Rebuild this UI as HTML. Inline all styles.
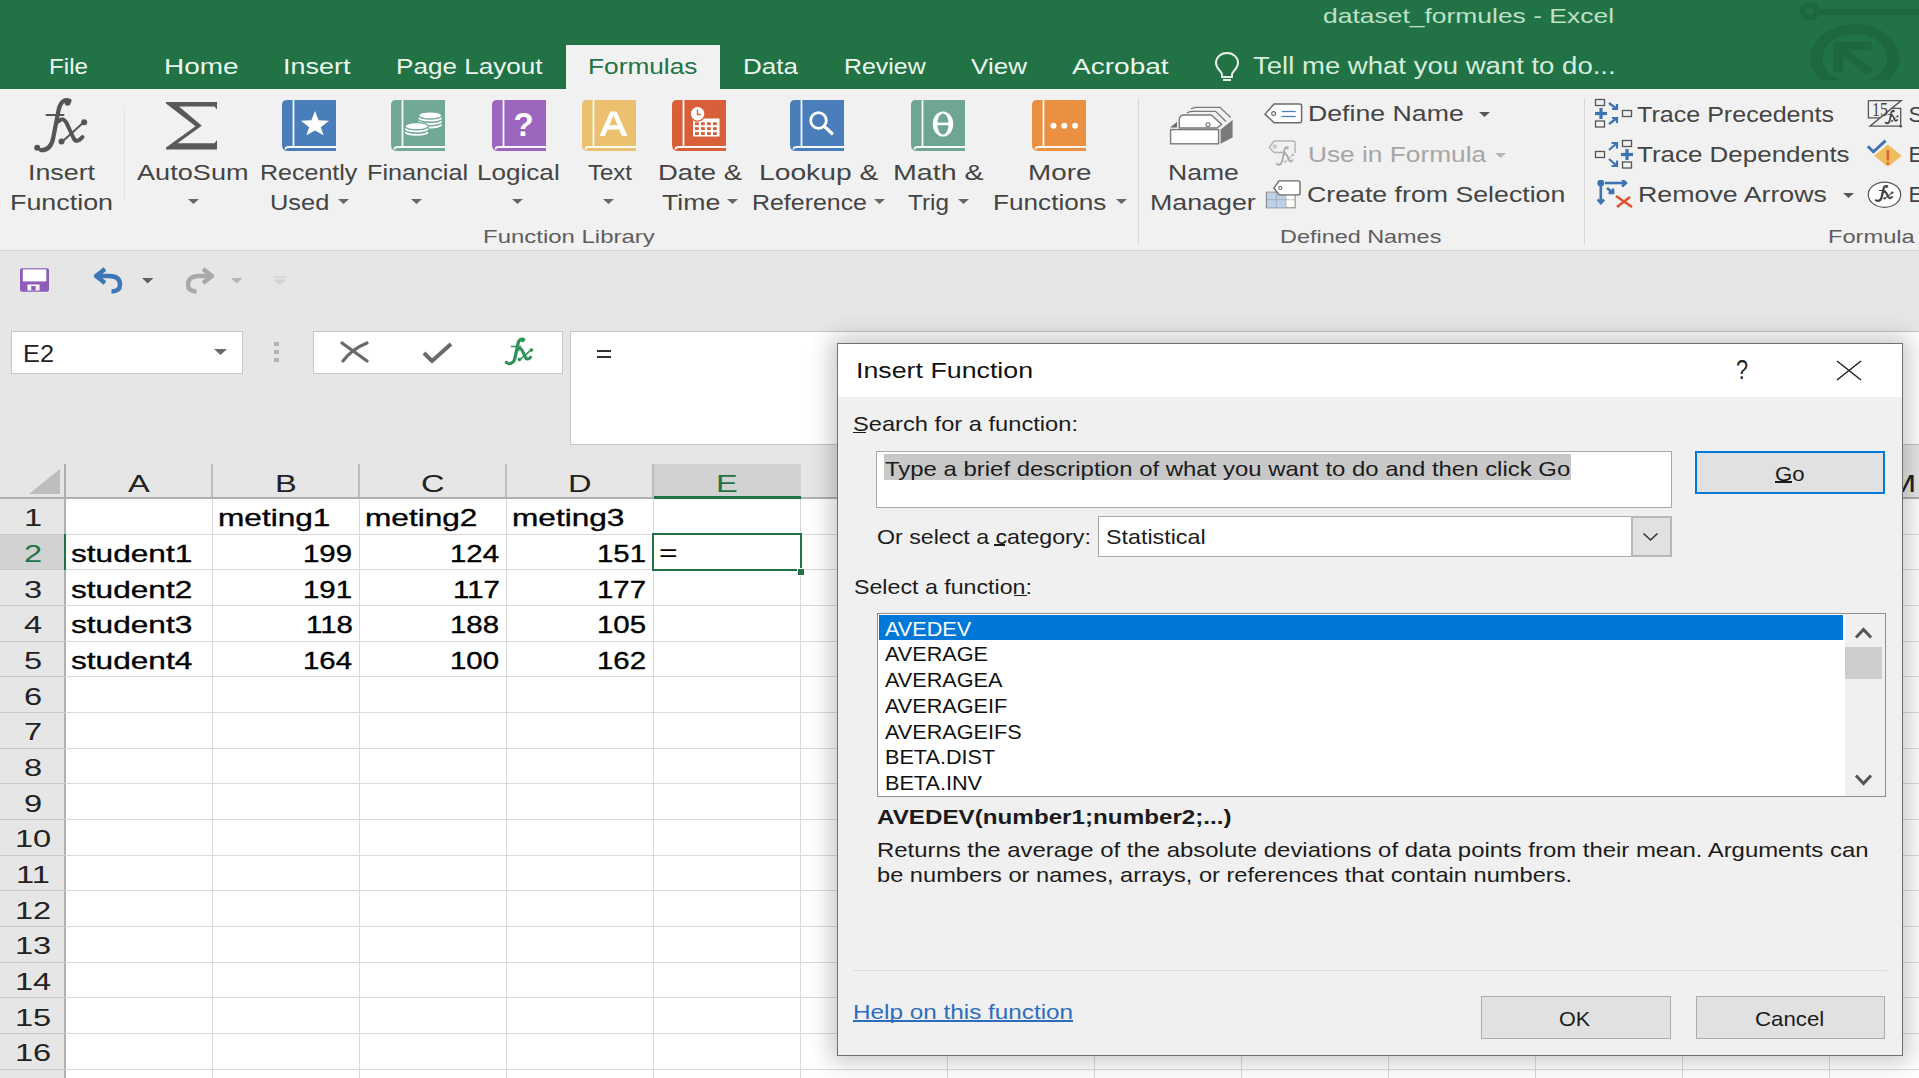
<!DOCTYPE html>
<html><head><meta charset="utf-8"><style>
html,body{margin:0;padding:0;width:1919px;height:1078px;overflow:hidden;background:#fff;}
body{position:relative;font-family:"Liberation Sans",sans-serif;}
.t{position:absolute;white-space:pre;line-height:1;transform-origin:0 0;}
.r{position:absolute;}
</style></head><body>
<div class="r" style="left:0px;top:0px;width:1919px;height:89px;background:#217346;"></div>
<svg class="r" style="left:1760px;top:0px" width="159" height="89" viewBox="0 0 159 89">
<g fill="none" stroke="#1e683d">
<ellipse cx="50" cy="11.3" rx="7" ry="6.3" stroke-width="6"/><line x1="57" y1="11.7" x2="159" y2="11.7" stroke-width="6.6"/>
<g transform="scale(1.33,1)"><circle cx="71.4" cy="58" r="29" stroke-width="9.5"/></g>
</g>
<path d="M73,41.8 H111.5 V50.1 H88 L112.5,69 L106.5,75.5 L83.5,56 V71.8 H73 Z" fill="#1e683d"/>
<rect x="0" y="80" width="159" height="9" fill="#217346"/>
</svg>
<div class="t" style="left:1323.00px;top:5.45px;font-size:21px;color:#bfe0c6;transform:scaleX(1.2592);">dataset_formules - Excel</div>
<div class="r" style="left:566px;top:45px;width:154px;height:44px;background:#f1f1f1;"></div>
<div class="t" style="left:48.50px;top:56.17px;font-size:22.5px;color:#ebf7ef;transform:scaleX(1.0766);">File</div>
<div class="t" style="left:164.30px;top:56.17px;font-size:22.5px;color:#ebf7ef;transform:scaleX(1.2434);">Home</div>
<div class="t" style="left:283.30px;top:56.17px;font-size:22.5px;color:#ebf7ef;transform:scaleX(1.1982);">Insert</div>
<div class="t" style="left:395.70px;top:56.17px;font-size:22.5px;color:#ebf7ef;transform:scaleX(1.1604);">Page Layout</div>
<div class="t" style="left:743.30px;top:56.17px;font-size:22.5px;color:#ebf7ef;transform:scaleX(1.1558);">Data</div>
<div class="t" style="left:844.30px;top:56.17px;font-size:22.5px;color:#ebf7ef;transform:scaleX(1.1070);">Review</div>
<div class="t" style="left:970.70px;top:56.17px;font-size:22.5px;color:#ebf7ef;transform:scaleX(1.1576);">View</div>
<div class="t" style="left:1071.70px;top:56.17px;font-size:22.5px;color:#ebf7ef;transform:scaleX(1.2463);">Acrobat</div>
<div class="t" style="left:587.50px;top:56.17px;font-size:22.5px;color:#217346;transform:scaleX(1.1671);">Formulas</div>
<svg class="r" style="left:1212px;top:50px" width="30" height="34" viewBox="0 0 30 34"><g fill="none" stroke="#e8f3ec" stroke-width="2">
<path d="M15,3 C8,3 4,8 4,13 C4,18 8,20 10,24 L10,27 L20,27 L20,24 C22,20 26,18 26,13 C26,8 22,3 15,3 Z"/>
<line x1="11" y1="30" x2="19" y2="30"/></g></svg>
<div class="t" style="left:1252.50px;top:55.45px;font-size:23px;color:#d6ecdc;transform:scaleX(1.1969);">Tell me what you want to do...</div>
<div class="r" style="left:0px;top:89px;width:1919px;height:161px;background:#f1f1f1;"></div>
<div class="r" style="left:0px;top:250px;width:1919px;height:1px;background:#d6d6d6;"></div>
<div class="r" style="left:124px;top:110px;width:1px;height:89px;background:#e1e1e1;"></div>
<div class="r" style="left:1138px;top:98px;width:1px;height:146px;background:#d7d7d7;"></div>
<div class="r" style="left:1584px;top:98px;width:1px;height:146px;background:#d7d7d7;"></div>
<div class="t" style="left:28.00px;top:162.38px;font-size:22.5px;color:#444444;transform:scaleX(1.1911);">Insert</div>
<div class="t" style="left:10.00px;top:191.88px;font-size:22.5px;color:#444444;transform:scaleX(1.1937);">Function</div>
<div class="t" style="left:136.70px;top:162.38px;font-size:22.5px;color:#444444;transform:scaleX(1.2053);">AutoSum</div>
<div class="t" style="left:260.00px;top:162.38px;font-size:22.5px;color:#444444;transform:scaleX(1.1117);">Recently</div>
<div class="t" style="left:270.00px;top:191.88px;font-size:22.5px;color:#444444;transform:scaleX(1.1287);">Used</div>
<div class="t" style="left:366.70px;top:162.38px;font-size:22.5px;color:#444444;transform:scaleX(1.1222);">Financial</div>
<div class="t" style="left:477.30px;top:162.38px;font-size:22.5px;color:#444444;transform:scaleX(1.1595);">Logical</div>
<div class="t" style="left:587.70px;top:162.38px;font-size:22.5px;color:#444444;transform:scaleX(1.0657);">Text</div>
<div class="t" style="left:658.30px;top:162.38px;font-size:22.5px;color:#444444;transform:scaleX(1.2220);">Date &amp;</div>
<div class="t" style="left:661.70px;top:191.88px;font-size:22.5px;color:#444444;transform:scaleX(1.1859);">Time</div>
<div class="t" style="left:759.00px;top:162.38px;font-size:22.5px;color:#444444;transform:scaleX(1.2550);">Lookup &amp;</div>
<div class="t" style="left:751.70px;top:191.88px;font-size:22.5px;color:#444444;transform:scaleX(1.1075);">Reference</div>
<div class="t" style="left:893.30px;top:162.38px;font-size:22.5px;color:#444444;transform:scaleX(1.2716);">Math &amp;</div>
<div class="t" style="left:908.30px;top:191.88px;font-size:22.5px;color:#444444;transform:scaleX(1.0814);">Trig</div>
<div class="t" style="left:1028.30px;top:162.38px;font-size:22.5px;color:#444444;transform:scaleX(1.2359);">More</div>
<div class="t" style="left:993.30px;top:191.88px;font-size:22.5px;color:#444444;transform:scaleX(1.1626);">Functions</div>
<div class="t" style="left:1168.20px;top:162.38px;font-size:22.5px;color:#444444;transform:scaleX(1.1785);">Name</div>
<div class="t" style="left:1149.70px;top:191.88px;font-size:22.5px;color:#444444;transform:scaleX(1.1908);">Manager</div>
<svg class="r" style="left:188.0px;top:198.8px" width="11" height="5" viewBox="0 0 11 5"><path d="M0,0 H11 L5.5,5 Z" fill="#666"/></svg>
<svg class="r" style="left:411.2px;top:198.8px" width="11" height="5" viewBox="0 0 11 5"><path d="M0,0 H11 L5.5,5 Z" fill="#666"/></svg>
<svg class="r" style="left:512.2px;top:198.8px" width="11" height="5" viewBox="0 0 11 5"><path d="M0,0 H11 L5.5,5 Z" fill="#666"/></svg>
<svg class="r" style="left:602.8px;top:198.8px" width="11" height="5" viewBox="0 0 11 5"><path d="M0,0 H11 L5.5,5 Z" fill="#666"/></svg>
<svg class="r" style="left:338.2px;top:198.8px" width="11" height="5" viewBox="0 0 11 5"><path d="M0,0 H11 L5.5,5 Z" fill="#666"/></svg>
<svg class="r" style="left:726.8px;top:198.8px" width="11" height="5" viewBox="0 0 11 5"><path d="M0,0 H11 L5.5,5 Z" fill="#666"/></svg>
<svg class="r" style="left:874.0px;top:198.8px" width="11" height="5" viewBox="0 0 11 5"><path d="M0,0 H11 L5.5,5 Z" fill="#666"/></svg>
<svg class="r" style="left:958.3px;top:198.8px" width="11" height="5" viewBox="0 0 11 5"><path d="M0,0 H11 L5.5,5 Z" fill="#666"/></svg>
<svg class="r" style="left:1115.7px;top:198.8px" width="11" height="5" viewBox="0 0 11 5"><path d="M0,0 H11 L5.5,5 Z" fill="#666"/></svg>
<div class="t" style="left:483.30px;top:226.95px;font-size:19px;color:#5e5e5e;transform:scaleX(1.2604);">Function Library</div>
<div class="t" style="left:1280.00px;top:226.95px;font-size:19px;color:#5e5e5e;transform:scaleX(1.2321);">Defined Names</div>
<div class="t" style="left:1828.00px;top:226.95px;font-size:19px;color:#5e5e5e;transform:scaleX(1.2448);">Formula</div>
<div class="t" style="left:1308.00px;top:103.38px;font-size:22.5px;color:#444444;transform:scaleX(1.1859);">Define Name</div>
<svg class="r" style="left:1479.0px;top:111.7px" width="11" height="5" viewBox="0 0 11 5"><path d="M0,0 H11 L5.5,5 Z" fill="#595959"/></svg>
<div class="t" style="left:1307.50px;top:144.18px;font-size:22.5px;color:#a6a6a6;transform:scaleX(1.1679);">Use in Formula</div>
<svg class="r" style="left:1494.5px;top:152.5px" width="11" height="5" viewBox="0 0 11 5"><path d="M0,0 H11 L5.5,5 Z" fill="#b5b5b5"/></svg>
<div class="t" style="left:1307.00px;top:184.18px;font-size:22.5px;color:#444444;transform:scaleX(1.1872);">Create from Selection</div>
<div class="t" style="left:1637.40px;top:103.58px;font-size:22.5px;color:#444444;transform:scaleX(1.1146);">Trace Precedents</div>
<div class="t" style="left:1637.40px;top:144.18px;font-size:22.5px;color:#444444;transform:scaleX(1.1537);">Trace Dependents</div>
<div class="t" style="left:1638.00px;top:184.08px;font-size:22.5px;color:#444444;transform:scaleX(1.1898);">Remove Arrows</div>
<svg class="r" style="left:1843.0px;top:192.5px" width="11" height="5" viewBox="0 0 11 5"><path d="M0,0 H11 L5.5,5 Z" fill="#595959"/></svg>
<div class="t" style="left:1908.60px;top:103.58px;font-size:22.5px;color:#444444;">S</div>
<div class="t" style="left:1908.60px;top:144.18px;font-size:22.5px;color:#444444;">E</div>
<div class="t" style="left:1908.60px;top:184.08px;font-size:22.5px;color:#444444;">E</div>
<div class="r" style="left:0px;top:251px;width:1919px;height:213px;background:#e6e6e6;"></div>
<svg class="r" style="left:30px;top:97px" width="62" height="58" viewBox="0 0 62 58"><g fill="#555" stroke="#555" stroke-linecap="round">
<path d="M39.5,3.8 C33.5,1.5 30,6 28.6,13 L23.2,41 C21.8,48 18.5,53.5 11,53.2" fill="none" stroke-width="4.2"/>
<circle cx="37.6" cy="5.8" r="3" stroke="none"/><circle cx="7.2" cy="50.8" r="3" stroke="none"/>
<line x1="16.5" y1="18" x2="33.5" y2="18" stroke-width="2"/>
<path d="M28.5,24.5 Q33,19.5 36.5,26 L43.5,41 Q46.5,47 52.5,40" fill="none" stroke-width="4"/>
<line x1="54.5" y1="24.5" x2="33" y2="44" stroke-width="2"/>
<circle cx="54.2" cy="25.2" r="3" stroke="none"/><circle cx="31.5" cy="44.5" r="3" stroke="none"/>
</g></svg>
<svg class="r" style="left:166px;top:102px" width="52" height="48" viewBox="0 0 52 48"><path d="M0,0 H51 V7.5 L48.5,4.4 H13 L35.8,23.7 L11.5,41.2 H48.5 L51,38 V47.6 H0 V45.5 L29.5,24.2 L0,1.5 Z" fill="#595959"/></svg>
<svg class="r" style="left:281.8px;top:99.8px" width="54" height="51" viewBox="0 0 54 51"><path d="M5,0 H54 V51 H6 Q0,51 0,45 V5 Q0,0 5,0 Z" fill="#4a7ebb"/>
<rect x="10.6" y="0" width="1.8" height="47.5" fill="#fff" opacity=".95"/>
<path d="M54,47 H7 Q3.5,47 3.5,49.5" stroke="#fff" stroke-width="1.8" fill="none" opacity=".95"/>
<path d="M33,11 L36.6,20.3 L47,20.8 L38.8,27.3 L41.6,35.3 L33,30.6 L24.4,35.3 L27.2,27.3 L19,20.8 L29.4,20.3 Z" fill="#fff"/></svg>
<svg class="r" style="left:390.9px;top:99.8px" width="54" height="51" viewBox="0 0 54 51"><path d="M5,0 H54 V51 H6 Q0,51 0,45 V5 Q0,0 5,0 Z" fill="#72a897"/>
<rect x="10.6" y="0" width="1.8" height="47.5" fill="#fff" opacity=".95"/>
<path d="M54,47 H7 Q3.5,47 3.5,49.5" stroke="#fff" stroke-width="1.8" fill="none" opacity=".95"/>
<path d="M27.000000000000004,15.4 A12.2,4.1 0 0 1 51.400000000000006,15.4 V25.6 A12.2,4.1 0 0 1 27.000000000000004,25.6 Z" fill="#72a897"/><ellipse cx="39.2" cy="15.4" rx="11.0" ry="2.9" fill="#fff"/><path d="M28.200000000000003,17.8 A11.0,2.9 0 0 0 50.2,17.8" stroke="#fff" stroke-width="1.8" fill="none"/><path d="M28.200000000000003,21.2 A11.0,2.9 0 0 0 50.2,21.2" stroke="#fff" stroke-width="1.8" fill="none"/><path d="M28.200000000000003,24.6 A11.0,2.9 0 0 0 50.2,24.6" stroke="#fff" stroke-width="1.8" fill="none"/><path d="M13.400000000000002,26.2 A12.2,4.1 0 0 1 37.800000000000004,26.2 V33.0 A12.2,4.1 0 0 1 13.400000000000002,33.0 Z" fill="#72a897"/><ellipse cx="25.6" cy="26.2" rx="11.0" ry="2.9" fill="#fff"/><path d="M14.600000000000001,28.599999999999998 A11.0,2.9 0 0 0 36.6,28.599999999999998" stroke="#fff" stroke-width="1.8" fill="none"/><path d="M14.600000000000001,32.0 A11.0,2.9 0 0 0 36.6,32.0" stroke="#fff" stroke-width="1.8" fill="none"/></svg>
<svg class="r" style="left:491.9px;top:99.8px" width="54" height="51" viewBox="0 0 54 51"><path d="M5,0 H54 V51 H6 Q0,51 0,45 V5 Q0,0 5,0 Z" fill="#9c66bf"/>
<rect x="10.6" y="0" width="1.8" height="47.5" fill="#fff" opacity=".95"/>
<path d="M54,47 H7 Q3.5,47 3.5,49.5" stroke="#fff" stroke-width="1.8" fill="none" opacity=".95"/>
<text x="31.5" y="35.5" text-anchor="middle" font-family="Liberation Sans" font-weight="bold" font-size="33" fill="#fff">?</text></svg>
<svg class="r" style="left:582px;top:99.8px" width="54" height="51" viewBox="0 0 54 51"><path d="M5,0 H54 V51 H6 Q0,51 0,45 V5 Q0,0 5,0 Z" fill="#ebc06f"/>
<rect x="10.6" y="0" width="1.8" height="47.5" fill="#fff" opacity=".95"/>
<path d="M54,47 H7 Q3.5,47 3.5,49.5" stroke="#fff" stroke-width="1.8" fill="none" opacity=".95"/>
<path d="M17.5,36 L28.3,11.4 H34.6 L45.4,36 H40 L37.3,29.5 H25.6 L22.9,36 Z M27.3,25.2 H35.6 L31.45,15.3 Z" fill="#fff"/></svg>
<svg class="r" style="left:672.3px;top:99.8px" width="54" height="51" viewBox="0 0 54 51"><path d="M5,0 H54 V51 H6 Q0,51 0,45 V5 Q0,0 5,0 Z" fill="#d95f3b"/>
<rect x="10.6" y="0" width="1.8" height="47.5" fill="#fff" opacity=".95"/>
<path d="M54,47 H7 Q3.5,47 3.5,49.5" stroke="#fff" stroke-width="1.8" fill="none" opacity=".95"/>
<rect x="21" y="18.5" width="26.5" height="18" fill="#fff"/><g fill="#d95f3b"><rect x="23" y="22.3" width="3.8" height="2.9"/><rect x="29" y="22.3" width="3.8" height="2.9"/><rect x="35" y="22.3" width="3.8" height="2.9"/><rect x="41" y="22.3" width="3.8" height="2.9"/><rect x="23" y="27.200000000000003" width="3.8" height="2.9"/><rect x="29" y="27.200000000000003" width="3.8" height="2.9"/><rect x="35" y="27.200000000000003" width="3.8" height="2.9"/><rect x="41" y="27.200000000000003" width="3.8" height="2.9"/><rect x="23" y="32.1" width="3.8" height="2.9"/><rect x="29" y="32.1" width="3.8" height="2.9"/><rect x="35" y="32.1" width="3.8" height="2.9"/><rect x="41" y="32.1" width="3.8" height="2.9"/></g>
<circle cx="25.6" cy="13.8" r="7.4" fill="#fff" stroke="#d95f3b" stroke-width="1.3"/>
<path d="M25.4,9.5 V14.5 H28.8" stroke="#d95f3b" stroke-width="1.3" fill="none"/></svg>
<svg class="r" style="left:790.3px;top:99.8px" width="54" height="51" viewBox="0 0 54 51"><path d="M5,0 H54 V51 H6 Q0,51 0,45 V5 Q0,0 5,0 Z" fill="#4a7ebb"/>
<rect x="10.6" y="0" width="1.8" height="47.5" fill="#fff" opacity=".95"/>
<path d="M54,47 H7 Q3.5,47 3.5,49.5" stroke="#fff" stroke-width="1.8" fill="none" opacity=".95"/>
<circle cx="28.5" cy="20.5" r="7.8" stroke="#fff" stroke-width="2.8" fill="none"/><line x1="34.3" y1="26.3" x2="42" y2="33.5" stroke="#fff" stroke-width="3.2" stroke-linecap="round"/></svg>
<svg class="r" style="left:911px;top:99.8px" width="54" height="51" viewBox="0 0 54 51"><path d="M5,0 H54 V51 H6 Q0,51 0,45 V5 Q0,0 5,0 Z" fill="#6ea595"/>
<rect x="10.6" y="0" width="1.8" height="47.5" fill="#fff" opacity=".95"/>
<path d="M54,47 H7 Q3.5,47 3.5,49.5" stroke="#fff" stroke-width="1.8" fill="none" opacity=".95"/>
<ellipse cx="32" cy="24" rx="10.2" ry="12.6" fill="#fff"/><ellipse cx="32" cy="24" rx="5.6" ry="10.6" fill="#6ea595"/><rect x="25" y="22.6" width="14" height="2.6" fill="#fff"/></svg>
<svg class="r" style="left:1032px;top:99.8px" width="54" height="51" viewBox="0 0 54 51"><path d="M5,0 H54 V51 H6 Q0,51 0,45 V5 Q0,0 5,0 Z" fill="#eb8f40"/>
<rect x="10.6" y="0" width="1.8" height="47.5" fill="#fff" opacity=".95"/>
<path d="M54,47 H7 Q3.5,47 3.5,49.5" stroke="#fff" stroke-width="1.8" fill="none" opacity=".95"/>
<circle cx="21.5" cy="25.8" r="3" fill="#fff"/><circle cx="32.3" cy="25.8" r="3" fill="#fff"/><circle cx="43.1" cy="25.8" r="3" fill="#fff"/></svg>
<svg class="r" style="left:1166px;top:104px" width="70" height="42" viewBox="0 0 70 42"><g stroke="#7a7a7a" stroke-width="1.3" fill="none">
<path d="M25,5 Q27,3.3 30,3.3 H54 L64.6,13.5"/>
<path d="M21,9.3 Q23,7.3 26,7.3 H49.6 L60,17.5"/>
</g>
<path d="M13.3,24 V16 Q13.3,11 18.3,11 H45.5 L55.6,20.5 L51,24 Z" fill="#fff" stroke="#7a7a7a" stroke-width="1.4"/>
<circle cx="42" cy="20.5" r="2" fill="none" stroke="#7a7a7a" stroke-width="1.2"/>
<path d="M4,23.5 L11,18 V23.5 Z" fill="#6b6b6b"/>
<path d="M54.6,25.5 L66.6,16 V33.5 L54.6,39.8 Z" fill="#7a7a7a"/>
<rect x="4.6" y="25.6" width="48" height="14.2" fill="#fff" stroke="#7a7a7a" stroke-width="1.4"/></svg>
<svg class="r" style="left:1263px;top:102px" width="40" height="22" viewBox="0 0 40 22"><path d="M11.1,1.9 H36.6 Q38.6,1.9 38.6,3.9 V18.8 Q38.6,20.8 36.6,20.8 H11.1 L2,12.1 Z" fill="#fff" stroke="#6b6b6b" stroke-width="1.5"/>
<circle cx="10.6" cy="11.6" r="1.9" fill="none" stroke="#6b6b6b" stroke-width="1.2"/>
<line x1="18.7" y1="9.5" x2="32.7" y2="9.5" stroke="#4a7fc0" stroke-width="1.3"/><line x1="18.7" y1="14.5" x2="32.7" y2="14.5" stroke="#4a7fc0" stroke-width="1.3"/></svg>
<svg class="r" style="left:1265px;top:138px" width="36" height="30" viewBox="0 0 36 30"><path d="M17,14.5 H9.1 L4.3,9.5 L9.1,3 H28.1 Q30.1,3 30.1,5 V15" fill="none" stroke="#b4b4b4" stroke-width="1.4"/>
<circle cx="9.8" cy="8.6" r="1.5" fill="none" stroke="#b4b4b4" stroke-width="1.1"/><g transform="translate(9.36,8.05) scale(0.3434,0.3527)" fill="#ababab" stroke="#ababab" stroke-linecap="round"><path d="M39.5,3.8 C33.5,1.5 30,6 28.6,13 L23.2,41 C21.8,48 18.5,53.5 11,53.2" fill="none" stroke-width="5.46"/>
<circle cx="37.6" cy="5.8" r="3.12" stroke="none"/><circle cx="7.2" cy="50.8" r="3.12" stroke="none"/>
<line x1="16.5" y1="18" x2="33.5" y2="18" stroke-width="2.60"/>
<path d="M28.5,24.5 Q33,19.5 36.5,26 L43.5,41 Q46.5,47 52.5,40" fill="none" stroke-width="5.20"/>
<line x1="54.5" y1="24.5" x2="33" y2="44" stroke-width="2.60"/>
<circle cx="54.2" cy="25.2" r="3.12" stroke="none"/><circle cx="31.5" cy="44.5" r="3.12" stroke="none"/></g></svg>
<svg class="r" style="left:1265px;top:180px" width="40" height="30" viewBox="0 0 40 30"><rect x="1.4" y="12.2" width="28.7" height="15.6" fill="#fff" stroke="#8a8a8a" stroke-width="1.1"/>
<rect x="2" y="12.8" width="19" height="14.5" fill="#bcd1e8"/>
<line x1="1.4" y1="19.7" x2="30.1" y2="19.7" stroke="#8a8a8a" stroke-width="0.8" opacity=".6"/>
<line x1="11.3" y1="12.2" x2="11.3" y2="27.8" stroke="#8a8a8a" stroke-width="0.8" opacity=".6"/><line x1="21" y1="12.2" x2="21" y2="27.8" stroke="#8a8a8a" stroke-width="0.8" opacity=".6"/>
<path d="M14,0.9 H33 Q35,0.9 35,2.9 V12.9 Q35,14.9 33,14.9 H14 L9,7.9 Z" fill="#fff" stroke="#6b6b6b" stroke-width="1.4"/>
<circle cx="15.3" cy="7.9" r="1.6" fill="none" stroke="#6b6b6b" stroke-width="1.1"/></svg>
<svg class="r" style="left:1594px;top:98px" width="40" height="32" viewBox="0 0 40 32"><g fill="none" stroke="#555" stroke-width="1.3">
<rect x="1.5" y="1.5" width="9" height="6"/><rect x="1.5" y="23" width="9" height="6"/><rect x="28.5" y="12.5" width="9" height="6"/></g>
<g stroke="#3d72b4" stroke-width="2.2" fill="none"><line x1="1" y1="15.5" x2="13" y2="15.5" stroke-width="3.2"/><line x1="7" y1="10" x2="7" y2="21" stroke-width="3.2"/>
<path d="M15,5 L23,11 M18,11 H23 V6"/><path d="M15,26 L23,20 M18,20 H23 V25"/></g></svg>
<svg class="r" style="left:1594px;top:139px" width="40" height="32" viewBox="0 0 40 32"><g fill="none" stroke="#555" stroke-width="1.3">
<rect x="1.5" y="12.5" width="9" height="6"/><rect x="28.5" y="1.5" width="9" height="6"/><rect x="28.5" y="23" width="9" height="6"/></g>
<g stroke="#3d72b4" stroke-width="2.2" fill="none"><line x1="27" y1="15.5" x2="39" y2="15.5" stroke-width="3.2"/><line x1="33" y1="10" x2="33" y2="21" stroke-width="3.2"/>
<path d="M15,11 L23,4 M17.5,4 H23 V9.5"/><path d="M15,20 L23,27 M17.5,27 H23 V21.5"/></g></svg>
<svg class="r" style="left:1596.5px;top:180px" width="40" height="36" viewBox="0 0 40 36"><g stroke="#3d72b4" stroke-width="2.6" fill="none">
<circle cx="3.8" cy="3" r="2.2" fill="#3d72b4"/><line x1="8" y1="3" x2="29" y2="3"/><path d="M25,-0.5 L29,3 L25,6.5"/>
<line x1="3.8" y1="6" x2="3.8" y2="23"/><path d="M0.5,19.5 L3.8,23 L7.1,19.5"/>
<path d="M10,8 L16,13 M11.5,13 H16 V8.5"/></g>
<g stroke="#e0502a" stroke-width="2.6"><line x1="19" y1="16" x2="35" y2="27"/><line x1="20" y1="27" x2="33" y2="17"/></g></svg>
<svg class="r" style="left:1866px;top:99px" width="38" height="32" viewBox="0 0 38 32"><g fill="none" stroke="#555" stroke-width="1.3">
<path d="M2.4,1.6 H35.2 L4,27.2 H34.7 V9.4 H24.6"/><path d="M2.4,1.6 V18.8 H14.2"/></g>
<circle cx="34.7" cy="27.2" r="1.4" fill="#555"/>
<text x="6" y="16.6" font-family="Liberation Serif" font-size="19" fill="#444" textLength="16" lengthAdjust="spacingAndGlyphs">15</text><g transform="translate(17.94,10.92) scale(0.2528,0.2514)" fill="#444" stroke="#444" stroke-linecap="round"><path d="M39.5,3.8 C33.5,1.5 30,6 28.6,13 L23.2,41 C21.8,48 18.5,53.5 11,53.2" fill="none" stroke-width="6.72"/>
<circle cx="37.6" cy="5.8" r="3.84" stroke="none"/><circle cx="7.2" cy="50.8" r="3.84" stroke="none"/>
<line x1="16.5" y1="18" x2="33.5" y2="18" stroke-width="3.20"/>
<path d="M28.5,24.5 Q33,19.5 36.5,26 L43.5,41 Q46.5,47 52.5,40" fill="none" stroke-width="6.40"/>
<line x1="54.5" y1="24.5" x2="33" y2="44" stroke-width="3.20"/>
<circle cx="54.2" cy="25.2" r="3.84" stroke="none"/><circle cx="31.5" cy="44.5" r="3.84" stroke="none"/></g></svg>
<svg class="r" style="left:1866px;top:139px" width="38" height="32" viewBox="0 0 38 32"><path d="M21.9,5.6 L35.8,16.7 L21.9,27.8 L8,16.7 Z" fill="#efbd5e"/>
<line x1="21.9" y1="11" x2="21.9" y2="21.5" stroke="#e0603a" stroke-width="2.6"/><circle cx="21.9" cy="24.6" r="1.4" fill="#e0603a"/>
<path d="M1.8,7.2 L7.4,12.8 L19.6,1.7" stroke="#3f73b5" stroke-width="3" fill="none"/></svg>
<svg class="r" style="left:1866px;top:181px" width="38" height="30" viewBox="0 0 38 30"><ellipse cx="18.5" cy="13.7" rx="16.2" ry="12.6" fill="#fff" stroke="#555" stroke-width="1.2"/><g transform="translate(7.54,3.98) scale(0.3472,0.3021)" fill="#444" stroke="#444" stroke-linecap="round"><path d="M39.5,3.8 C33.5,1.5 30,6 28.6,13 L23.2,41 C21.8,48 18.5,53.5 11,53.2" fill="none" stroke-width="6.72"/>
<circle cx="37.6" cy="5.8" r="3.84" stroke="none"/><circle cx="7.2" cy="50.8" r="3.84" stroke="none"/>
<line x1="16.5" y1="18" x2="33.5" y2="18" stroke-width="3.20"/>
<path d="M28.5,24.5 Q33,19.5 36.5,26 L43.5,41 Q46.5,47 52.5,40" fill="none" stroke-width="6.40"/>
<line x1="54.5" y1="24.5" x2="33" y2="44" stroke-width="3.20"/>
<circle cx="54.2" cy="25.2" r="3.84" stroke="none"/><circle cx="31.5" cy="44.5" r="3.84" stroke="none"/></g></svg>
<svg class="r" style="left:19px;top:267px" width="32" height="26" viewBox="0 0 32 26"><path d="M1,3 Q1,1.3 3,1.3 H28 Q30,1.3 30,3 V22.7 Q30,24.7 28,24.7 H3 Q1,24.7 1,22.7 Z" fill="#8e5bb8"/>
<rect x="3.8" y="2.4" width="23.5" height="12" fill="#fff"/><rect x="8.4" y="17.5" width="12.1" height="6" fill="#fff"/><rect x="12.2" y="19" width="4.5" height="4.5" fill="#8e5bb8"/></svg>
<svg class="r" style="left:90px;top:264px" width="36" height="32" viewBox="0 0 36 32"><path d="M7,12 H19 Q30,12 30,20.5 Q30,27.5 21.5,27.5" stroke="#3d76b8" stroke-width="4.4" fill="none"/>
<path d="M15,5 L6,12 L15,19" stroke="#3d76b8" stroke-width="4.4" fill="none" stroke-linejoin="round"/></svg>
<svg class="r" style="left:142px;top:277.5px" width="12" height="6" viewBox="0 0 12 6"><path d="M0,0 H11.4 L5.7,5.5 Z" fill="#5f5f5f"/></svg>
<svg class="r" style="left:182px;top:264px" width="36" height="32" viewBox="0 0 36 32"><path d="M29,12 H17 Q6,12 6,20.5 Q6,27.5 14.5,27.5" stroke="#a9a9a9" stroke-width="4.4" fill="none"/>
<path d="M21,5 L30,12 L21,19" stroke="#a9a9a9" stroke-width="4.4" fill="none" stroke-linejoin="round"/></svg>
<svg class="r" style="left:231px;top:277.5px" width="12" height="6" viewBox="0 0 12 6"><path d="M0,0 H11.4 L5.7,5.5 Z" fill="#b5b5b5"/></svg>
<svg class="r" style="left:273px;top:276px" width="14" height="10" viewBox="0 0 14 10"><rect x="0" y="0.5" width="13.6" height="1.4" fill="#d2d2d2"/><path d="M0,3.5 H13.6 L6.8,9 Z" fill="#d2d2d2"/></svg>
<div class="r" style="left:11px;top:331px;width:232px;height:43px;background:#fff;border:1px solid #c6c6c6;box-sizing:border-box;"></div>
<div class="t" style="left:23.00px;top:342.40px;font-size:24px;color:#222;transform:scaleX(1.0544);">E2</div>
<svg class="r" style="left:214px;top:349px" width="14" height="7" viewBox="0 0 14 7"><path d="M0,0 H13 L6.5,6 Z" fill="#6a6a6a"/></svg>
<div class="r" style="left:274px;top:342px;width:5px;height:4px;background:#b3b3b3;"></div>
<div class="r" style="left:274px;top:350px;width:5px;height:4px;background:#b3b3b3;"></div>
<div class="r" style="left:274px;top:358px;width:5px;height:4px;background:#b3b3b3;"></div>
<div class="r" style="left:313px;top:331px;width:250px;height:43px;background:#fff;border:1px solid #c6c6c6;box-sizing:border-box;"></div>
<svg class="r" style="left:340px;top:341px" width="30" height="22" viewBox="0 0 30 22"><path d="M2,2 L27,20 M3,20 Q12,8 27,2" stroke="#6a6a6a" stroke-width="3.2" fill="none" stroke-linecap="round"/></svg>
<svg class="r" style="left:422px;top:341px" width="32" height="22" viewBox="0 0 32 22"><path d="M2,12 L10,20 L29,3" stroke="#6a6a6a" stroke-width="4" fill="none"/></svg>
<svg class="r" style="left:500px;top:335px" width="40" height="34" viewBox="0 0 40 34"><g transform="translate(2.78,2.57) scale(0.5283,0.4916)" fill="#2e9358" stroke="#2e9358" stroke-linecap="round"><path d="M39.5,3.8 C33.5,1.5 30,6 28.6,13 L23.2,41 C21.8,48 18.5,53.5 11,53.2" fill="none" stroke-width="6.30"/>
<circle cx="37.6" cy="5.8" r="3.60" stroke="none"/><circle cx="7.2" cy="50.8" r="3.60" stroke="none"/>
<line x1="16.5" y1="18" x2="33.5" y2="18" stroke-width="3.00"/>
<path d="M28.5,24.5 Q33,19.5 36.5,26 L43.5,41 Q46.5,47 52.5,40" fill="none" stroke-width="6.00"/>
<line x1="54.5" y1="24.5" x2="33" y2="44" stroke-width="3.00"/>
<circle cx="54.2" cy="25.2" r="3.60" stroke="none"/><circle cx="31.5" cy="44.5" r="3.60" stroke="none"/></g></svg>
<div class="r" style="left:570px;top:331px;width:1360px;height:114px;background:#fff;border:1px solid #c6c6c6;box-sizing:border-box;"></div>
<div class="r" style="left:597px;top:349.6px;width:14px;height:2.1999999999999886px;background:#333;"></div>
<div class="r" style="left:597px;top:356px;width:14px;height:2.3000000000000114px;background:#333;"></div>
<div class="r" style="left:0px;top:464px;width:1919px;height:35px;background:#e6e6e6;"></div>
<div class="r" style="left:0px;top:499px;width:65px;height:579px;background:#e6e6e6;"></div>
<div class="r" style="left:65px;top:499px;width:1854px;height:579px;background:#ffffff;"></div>
<div class="r" style="left:211.4px;top:464px;width:1.1999999999999886px;height:34px;background:#bdbdbd;"></div>
<div class="r" style="left:358.4px;top:464px;width:1.2000000000000455px;height:34px;background:#bdbdbd;"></div>
<div class="r" style="left:505.4px;top:464px;width:1.2000000000000455px;height:34px;background:#bdbdbd;"></div>
<div class="r" style="left:652.4px;top:464px;width:1.2000000000000455px;height:34px;background:#bdbdbd;"></div>
<div class="r" style="left:799.4px;top:464px;width:1.2000000000000455px;height:34px;background:#bdbdbd;"></div>
<div class="r" style="left:946.4px;top:464px;width:1.2000000000000455px;height:34px;background:#bdbdbd;"></div>
<div class="r" style="left:1093.4px;top:464px;width:1.199999999999818px;height:34px;background:#bdbdbd;"></div>
<div class="r" style="left:1240.4px;top:464px;width:1.199999999999818px;height:34px;background:#bdbdbd;"></div>
<div class="r" style="left:1387.4px;top:464px;width:1.199999999999818px;height:34px;background:#bdbdbd;"></div>
<div class="r" style="left:1534.4px;top:464px;width:1.199999999999818px;height:34px;background:#bdbdbd;"></div>
<div class="r" style="left:1681.4px;top:464px;width:1.199999999999818px;height:34px;background:#bdbdbd;"></div>
<div class="r" style="left:1828.4px;top:464px;width:1.199999999999818px;height:34px;background:#bdbdbd;"></div>
<div class="r" style="left:64px;top:464px;width:2px;height:614px;background:#b0b0b0;"></div>
<div class="r" style="left:0px;top:497.4px;width:1919px;height:2.0px;background:#b0b0b0;"></div>
<div class="r" style="left:653.5px;top:464px;width:147.0px;height:33.5px;background:#d2d2d2;"></div>
<div class="r" style="left:653.5px;top:495.5px;width:147.0px;height:3.5px;background:#217346;"></div>
<svg class="r" style="left:29px;top:469px" width="32" height="25" viewBox="0 0 32 25"><path d="M31,0 V25 H0 Z" fill="#bdbdbd"/></svg>
<div class="r" style="left:65px;top:533.5699999999999px;width:1854px;height:1.0px;background:#dadada;"></div>
<div class="r" style="left:0px;top:533.5699999999999px;width:65px;height:1.0px;background:#c9c9c9;"></div>
<div class="r" style="left:65px;top:569.24px;width:1854px;height:1.0px;background:#dadada;"></div>
<div class="r" style="left:0px;top:569.24px;width:65px;height:1.0px;background:#c9c9c9;"></div>
<div class="r" style="left:65px;top:604.91px;width:1854px;height:1.0px;background:#dadada;"></div>
<div class="r" style="left:0px;top:604.91px;width:65px;height:1.0px;background:#c9c9c9;"></div>
<div class="r" style="left:65px;top:640.5799999999999px;width:1854px;height:1.0px;background:#dadada;"></div>
<div class="r" style="left:0px;top:640.5799999999999px;width:65px;height:1.0px;background:#c9c9c9;"></div>
<div class="r" style="left:65px;top:676.25px;width:1854px;height:1.0px;background:#dadada;"></div>
<div class="r" style="left:0px;top:676.25px;width:65px;height:1.0px;background:#c9c9c9;"></div>
<div class="r" style="left:65px;top:711.92px;width:1854px;height:1.0px;background:#dadada;"></div>
<div class="r" style="left:0px;top:711.92px;width:65px;height:1.0px;background:#c9c9c9;"></div>
<div class="r" style="left:65px;top:747.5899999999999px;width:1854px;height:1.0px;background:#dadada;"></div>
<div class="r" style="left:0px;top:747.5899999999999px;width:65px;height:1.0px;background:#c9c9c9;"></div>
<div class="r" style="left:65px;top:783.26px;width:1854px;height:1.0px;background:#dadada;"></div>
<div class="r" style="left:0px;top:783.26px;width:65px;height:1.0px;background:#c9c9c9;"></div>
<div class="r" style="left:65px;top:818.9300000000001px;width:1854px;height:1.0px;background:#dadada;"></div>
<div class="r" style="left:0px;top:818.9300000000001px;width:65px;height:1.0px;background:#c9c9c9;"></div>
<div class="r" style="left:65px;top:854.6px;width:1854px;height:1.0px;background:#dadada;"></div>
<div class="r" style="left:0px;top:854.6px;width:65px;height:1.0px;background:#c9c9c9;"></div>
<div class="r" style="left:65px;top:890.27px;width:1854px;height:1.0px;background:#dadada;"></div>
<div class="r" style="left:0px;top:890.27px;width:65px;height:1.0px;background:#c9c9c9;"></div>
<div class="r" style="left:65px;top:925.94px;width:1854px;height:1.0px;background:#dadada;"></div>
<div class="r" style="left:0px;top:925.94px;width:65px;height:1.0px;background:#c9c9c9;"></div>
<div class="r" style="left:65px;top:961.61px;width:1854px;height:1.0px;background:#dadada;"></div>
<div class="r" style="left:0px;top:961.61px;width:65px;height:1.0px;background:#c9c9c9;"></div>
<div class="r" style="left:65px;top:997.28px;width:1854px;height:1.0px;background:#dadada;"></div>
<div class="r" style="left:0px;top:997.28px;width:65px;height:1.0px;background:#c9c9c9;"></div>
<div class="r" style="left:65px;top:1032.95px;width:1854px;height:1.0px;background:#dadada;"></div>
<div class="r" style="left:0px;top:1032.95px;width:65px;height:1.0px;background:#c9c9c9;"></div>
<div class="r" style="left:65px;top:1068.62px;width:1854px;height:1.0px;background:#dadada;"></div>
<div class="r" style="left:0px;top:1068.62px;width:65px;height:1.0px;background:#c9c9c9;"></div>
<div class="r" style="left:211.5px;top:499px;width:1.0px;height:579px;background:#dadada;"></div>
<div class="r" style="left:358.5px;top:499px;width:1.0px;height:579px;background:#dadada;"></div>
<div class="r" style="left:505.5px;top:499px;width:1.0px;height:579px;background:#dadada;"></div>
<div class="r" style="left:652.5px;top:499px;width:1.0px;height:579px;background:#dadada;"></div>
<div class="r" style="left:799.5px;top:499px;width:1.0px;height:579px;background:#dadada;"></div>
<div class="r" style="left:946.5px;top:499px;width:1.0px;height:579px;background:#dadada;"></div>
<div class="r" style="left:1093.5px;top:499px;width:1.0px;height:579px;background:#dadada;"></div>
<div class="r" style="left:1240.5px;top:499px;width:1.0px;height:579px;background:#dadada;"></div>
<div class="r" style="left:1387.5px;top:499px;width:1.0px;height:579px;background:#dadada;"></div>
<div class="r" style="left:1534.5px;top:499px;width:1.0px;height:579px;background:#dadada;"></div>
<div class="r" style="left:1681.5px;top:499px;width:1.0px;height:579px;background:#dadada;"></div>
<div class="r" style="left:1828.5px;top:499px;width:1.0px;height:579px;background:#dadada;"></div>
<div class="r" style="left:0px;top:534.5699999999999px;width:64px;height:34.67000000000007px;background:#d2d2d2;"></div>
<div class="r" style="left:63.5px;top:534.0699999999999px;width:2.5px;height:35.67000000000007px;background:#217346;"></div>
<div class="t" style="left:127.58px;top:471.98px;font-size:24.5px;color:#222;transform:scaleX(1.3300);">A</div>
<div class="t" style="left:274.67px;top:471.98px;font-size:24.5px;color:#222;transform:scaleX(1.3300);">B</div>
<div class="t" style="left:420.77px;top:471.98px;font-size:24.5px;color:#222;transform:scaleX(1.3300);">C</div>
<div class="t" style="left:567.77px;top:471.98px;font-size:24.5px;color:#222;transform:scaleX(1.3300);">D</div>
<div class="t" style="left:715.67px;top:471.98px;font-size:24.5px;color:#217346;transform:scaleX(1.3300);">E</div>
<div class="t" style="left:863.56px;top:471.98px;font-size:24.5px;color:#222;transform:scaleX(1.3300);">F</div>
<div class="t" style="left:1007.79px;top:471.98px;font-size:24.5px;color:#222;transform:scaleX(1.3300);">G</div>
<div class="t" style="left:1155.77px;top:471.98px;font-size:24.5px;color:#222;transform:scaleX(1.3300);">H</div>
<div class="t" style="left:1309.94px;top:471.98px;font-size:24.5px;color:#222;transform:scaleX(1.3300);">I</div>
<div class="t" style="left:1453.35px;top:471.98px;font-size:24.5px;color:#222;transform:scaleX(1.3300);">J</div>
<div class="t" style="left:1597.67px;top:471.98px;font-size:24.5px;color:#222;transform:scaleX(1.3300);">K</div>
<div class="t" style="left:1746.46px;top:471.98px;font-size:24.5px;color:#222;transform:scaleX(1.3300);">L</div>
<div class="t" style="left:1888.90px;top:471.98px;font-size:24.5px;color:#222;transform:scaleX(1.3300);">M</div>
<div class="t" style="left:23.76px;top:506.17px;font-size:24.5px;color:#222;transform:scaleX(1.3300);">1</div>
<div class="t" style="left:23.76px;top:541.84px;font-size:24.5px;color:#217346;transform:scaleX(1.3300);">2</div>
<div class="t" style="left:23.76px;top:577.51px;font-size:24.5px;color:#222;transform:scaleX(1.3300);">3</div>
<div class="t" style="left:23.76px;top:613.18px;font-size:24.5px;color:#222;transform:scaleX(1.3300);">4</div>
<div class="t" style="left:23.76px;top:648.85px;font-size:24.5px;color:#222;transform:scaleX(1.3300);">5</div>
<div class="t" style="left:23.76px;top:684.52px;font-size:24.5px;color:#222;transform:scaleX(1.3300);">6</div>
<div class="t" style="left:23.76px;top:720.19px;font-size:24.5px;color:#222;transform:scaleX(1.3300);">7</div>
<div class="t" style="left:23.76px;top:755.86px;font-size:24.5px;color:#222;transform:scaleX(1.3300);">8</div>
<div class="t" style="left:23.76px;top:791.53px;font-size:24.5px;color:#222;transform:scaleX(1.3300);">9</div>
<div class="t" style="left:14.72px;top:827.20px;font-size:24.5px;color:#222;transform:scaleX(1.3300);">10</div>
<div class="t" style="left:15.86px;top:862.87px;font-size:24.5px;color:#222;transform:scaleX(1.3300);">11</div>
<div class="t" style="left:14.72px;top:898.54px;font-size:24.5px;color:#222;transform:scaleX(1.3300);">12</div>
<div class="t" style="left:14.72px;top:934.21px;font-size:24.5px;color:#222;transform:scaleX(1.3300);">13</div>
<div class="t" style="left:14.72px;top:969.88px;font-size:24.5px;color:#222;transform:scaleX(1.3300);">14</div>
<div class="t" style="left:14.72px;top:1005.55px;font-size:24.5px;color:#222;transform:scaleX(1.3300);">15</div>
<div class="t" style="left:14.72px;top:1041.22px;font-size:24.5px;color:#222;transform:scaleX(1.3300);">16</div>
<div class="t" style="left:218.00px;top:506.17px;font-size:24.5px;color:#000;transform:scaleX(1.2900);-webkit-text-stroke:0.35px #000;">meting1</div>
<div class="t" style="left:365.00px;top:506.17px;font-size:24.5px;color:#000;transform:scaleX(1.2900);-webkit-text-stroke:0.35px #000;">meting2</div>
<div class="t" style="left:512.00px;top:506.17px;font-size:24.5px;color:#000;transform:scaleX(1.2900);-webkit-text-stroke:0.35px #000;">meting3</div>
<div class="t" style="left:71.00px;top:541.84px;font-size:24.5px;color:#000;transform:scaleX(1.2900);-webkit-text-stroke:0.35px #000;">student1</div>
<div class="t" style="left:303.40px;top:541.84px;font-size:24.5px;color:#000;transform:scaleX(1.2000);-webkit-text-stroke:0.35px #000;">199</div>
<div class="t" style="left:450.40px;top:541.84px;font-size:24.5px;color:#000;transform:scaleX(1.2000);-webkit-text-stroke:0.35px #000;">124</div>
<div class="t" style="left:597.40px;top:541.84px;font-size:24.5px;color:#000;transform:scaleX(1.2000);-webkit-text-stroke:0.35px #000;">151</div>
<div class="t" style="left:71.00px;top:577.51px;font-size:24.5px;color:#000;transform:scaleX(1.2900);-webkit-text-stroke:0.35px #000;">student2</div>
<div class="t" style="left:303.40px;top:577.51px;font-size:24.5px;color:#000;transform:scaleX(1.2000);-webkit-text-stroke:0.35px #000;">191</div>
<div class="t" style="left:452.61px;top:577.51px;font-size:24.5px;color:#000;transform:scaleX(1.2000);-webkit-text-stroke:0.35px #000;">117</div>
<div class="t" style="left:597.40px;top:577.51px;font-size:24.5px;color:#000;transform:scaleX(1.2000);-webkit-text-stroke:0.35px #000;">177</div>
<div class="t" style="left:71.00px;top:613.18px;font-size:24.5px;color:#000;transform:scaleX(1.2900);-webkit-text-stroke:0.35px #000;">student3</div>
<div class="t" style="left:305.61px;top:613.18px;font-size:24.5px;color:#000;transform:scaleX(1.2000);-webkit-text-stroke:0.35px #000;">118</div>
<div class="t" style="left:450.40px;top:613.18px;font-size:24.5px;color:#000;transform:scaleX(1.2000);-webkit-text-stroke:0.35px #000;">188</div>
<div class="t" style="left:597.40px;top:613.18px;font-size:24.5px;color:#000;transform:scaleX(1.2000);-webkit-text-stroke:0.35px #000;">105</div>
<div class="t" style="left:71.00px;top:648.85px;font-size:24.5px;color:#000;transform:scaleX(1.2900);-webkit-text-stroke:0.35px #000;">student4</div>
<div class="t" style="left:303.40px;top:648.85px;font-size:24.5px;color:#000;transform:scaleX(1.2000);-webkit-text-stroke:0.35px #000;">164</div>
<div class="t" style="left:450.40px;top:648.85px;font-size:24.5px;color:#000;transform:scaleX(1.2000);-webkit-text-stroke:0.35px #000;">100</div>
<div class="t" style="left:597.40px;top:648.85px;font-size:24.5px;color:#000;transform:scaleX(1.2000);-webkit-text-stroke:0.35px #000;">162</div>
<div class="t" style="left:659.00px;top:541.47px;font-size:24.5px;color:#000;transform:scaleX(1.3);transform-origin:0 0;">=</div>
<div class="r" style="left:652px;top:533.0699999999999px;width:150px;height:38.17000000000007px;border:2.5px solid #217346;box-sizing:border-box;"></div>
<div class="r" style="left:797px;top:567.74px;width:6px;height:6.0px;background:#217346;border:1px solid #fff;"></div>
<div class="r" style="left:836.5px;top:342.5px;width:1066.5px;height:713.5px;background:#f0f0f0;border:1.5px solid #707070;box-sizing:border-box;box-shadow:0 0 22px 6px rgba(0,0,0,0.22);"></div>
<div class="r" style="left:838.0px;top:344.0px;width:1063.5px;height:53.0px;background:#ffffff;"></div>
<div class="t" style="left:855.50px;top:360.28px;font-size:22.5px;color:#111;transform:scaleX(1.1899);">Insert Function</div>
<div class="t" style="left:1736.00px;top:356.85px;font-size:27px;color:#222;transform:scaleX(0.8008);">?</div>
<svg class="r" style="left:1836px;top:359.5px" width="26" height="21" viewBox="0 0 26 21"><path d="M1,1 L25,20 M25,1 L1,20" stroke="#222" stroke-width="1.5"/></svg>
<div class="t" style="left:853.40px;top:415.27px;font-size:19.8px;color:#1b1b1b;transform:scaleX(1.1966);">Search for a function:</div>
<div class="r" style="left:853.4px;top:431.7px;width:12.600000000000023px;height:1.5px;background:#1b1b1b;"></div>
<div class="r" style="left:876.3px;top:450.6px;width:795.7px;height:57.89999999999998px;background:#fff;border:1px solid #a9a9a9;box-sizing:border-box;"></div>
<div class="r" style="left:883.8px;top:454px;width:687.2px;height:25.80000000000001px;background:#c8c8c8;"></div>
<div class="t" style="left:884.50px;top:459.97px;font-size:19.8px;color:#1b1b1b;transform:scaleX(1.2101);">Type a brief description of what you want to do and then click Go</div>
<div class="r" style="left:1695.4px;top:450.8px;width:189.29999999999995px;height:43.19999999999999px;background:#e1e1e1;border:2.5px solid #0078d7;box-sizing:border-box;"></div>
<div class="t" style="left:1775.40px;top:464.77px;font-size:19.8px;color:#1b1b1b;transform:scaleX(1.1198);">Go</div>
<div class="r" style="left:1775.4px;top:481.2px;width:16.59999999999991px;height:1.5px;background:#1b1b1b;"></div>
<div class="t" style="left:876.50px;top:527.97px;font-size:19.8px;color:#1b1b1b;transform:scaleX(1.1716);">Or select a category:</div>
<div class="r" style="left:994px;top:544.4px;width:11px;height:1.5px;background:#1b1b1b;"></div>
<div class="r" style="left:1097.9px;top:516px;width:574.0999999999999px;height:40.5px;background:#fff;border:1px solid #a9a9a9;box-sizing:border-box;"></div>
<div class="r" style="left:1631.3px;top:516px;width:40.700000000000045px;height:40.5px;background:#e1e1e1;border:2px solid #b8b8b8;box-sizing:border-box;"></div>
<svg class="r" style="left:1642px;top:531.5px" width="18" height="10" viewBox="0 0 18 10"><path d="M1.5,1.5 L8.5,8 L15.5,1.5" stroke="#333" stroke-width="1.6" fill="none"/></svg>
<div class="t" style="left:1106.00px;top:527.97px;font-size:19.8px;color:#1b1b1b;transform:scaleX(1.1765);">Statistical</div>
<div class="t" style="left:854.00px;top:578.17px;font-size:19.8px;color:#1b1b1b;transform:scaleX(1.1721);">Select a function:</div>
<div class="r" style="left:1014px;top:594.6px;width:12.5px;height:1.5px;background:#1b1b1b;"></div>
<div class="r" style="left:876.5px;top:612.5px;width:1009.5px;height:184.5px;background:#fff;border:1px solid #8f8f8f;box-sizing:border-box;"></div>
<div class="r" style="left:879px;top:614.7px;width:964.3px;height:25.59999999999991px;background:#0078d7;"></div>
<div class="r" style="left:1845.3px;top:614px;width:39.700000000000045px;height:181.5px;background:#f0f0f0;"></div>
<div class="r" style="left:1845.3px;top:647px;width:36.700000000000045px;height:31.600000000000023px;background:#cdcdcd;"></div>
<svg class="r" style="left:1854px;top:625px" width="20" height="15" viewBox="0 0 20 15"><path d="M2,12.5 L9.5,4.5 L17,12.5" stroke="#555" stroke-width="3" fill="none"/></svg>
<svg class="r" style="left:1854px;top:773px" width="20" height="15" viewBox="0 0 20 15"><path d="M2,2.5 L9.5,10.5 L17,2.5" stroke="#555" stroke-width="3" fill="none"/></svg>
<div class="t" style="left:884.50px;top:619.77px;font-size:19.8px;color:#fff;transform:scaleX(1.0937);">AVEDEV</div>
<div class="t" style="left:884.50px;top:645.47px;font-size:19.8px;color:#111;transform:scaleX(1.0937);">AVERAGE</div>
<div class="t" style="left:884.50px;top:671.17px;font-size:19.8px;color:#111;transform:scaleX(1.0937);">AVERAGEA</div>
<div class="t" style="left:884.50px;top:696.87px;font-size:19.8px;color:#111;transform:scaleX(1.0937);">AVERAGEIF</div>
<div class="t" style="left:884.50px;top:722.57px;font-size:19.8px;color:#111;transform:scaleX(1.0937);">AVERAGEIFS</div>
<div class="t" style="left:884.50px;top:748.27px;font-size:19.8px;color:#111;transform:scaleX(1.0937);">BETA.DIST</div>
<div class="t" style="left:884.50px;top:773.97px;font-size:19.8px;color:#111;transform:scaleX(1.0937);">BETA.INV</div>
<div class="t" style="left:876.50px;top:808.37px;font-size:19.8px;color:#1b1b1b;font-weight:bold;transform:scaleX(1.2235);">AVEDEV(number1;number2;...)</div>
<div class="t" style="left:876.50px;top:840.67px;font-size:19.8px;color:#1b1b1b;transform:scaleX(1.2087);">Returns the average of the absolute deviations of data points from their mean. Arguments can</div>
<div class="t" style="left:876.50px;top:866.47px;font-size:19.8px;color:#1b1b1b;transform:scaleX(1.1951);">be numbers or names, arrays, or references that contain numbers.</div>
<div class="r" style="left:852.7px;top:970.3px;width:1034.0px;height:1.0px;background:#dcdcdc;"></div>
<div class="t" style="left:852.70px;top:1002.97px;font-size:19.8px;color:#2c6dbf;transform:scaleX(1.2281);">Help on this function</div>
<div class="r" style="left:852.7px;top:1020.3px;width:220.29999999999995px;height:1.6000000000000227px;background:#2c6dbf;"></div>
<div class="r" style="left:1481px;top:996.3px;width:189.5px;height:43.200000000000045px;background:#e1e1e1;border:1px solid #adadad;box-sizing:border-box;"></div>
<div class="r" style="left:1695.5px;top:996.3px;width:189.0px;height:43.200000000000045px;background:#e1e1e1;border:1px solid #adadad;box-sizing:border-box;"></div>
<div class="t" style="left:1559.30px;top:1010.37px;font-size:19.8px;color:#1b1b1b;transform:scaleX(1.0905);">OK</div>
<div class="t" style="left:1755.00px;top:1010.37px;font-size:19.8px;color:#1b1b1b;transform:scaleX(1.1236);">Cancel</div>
</body></html>
